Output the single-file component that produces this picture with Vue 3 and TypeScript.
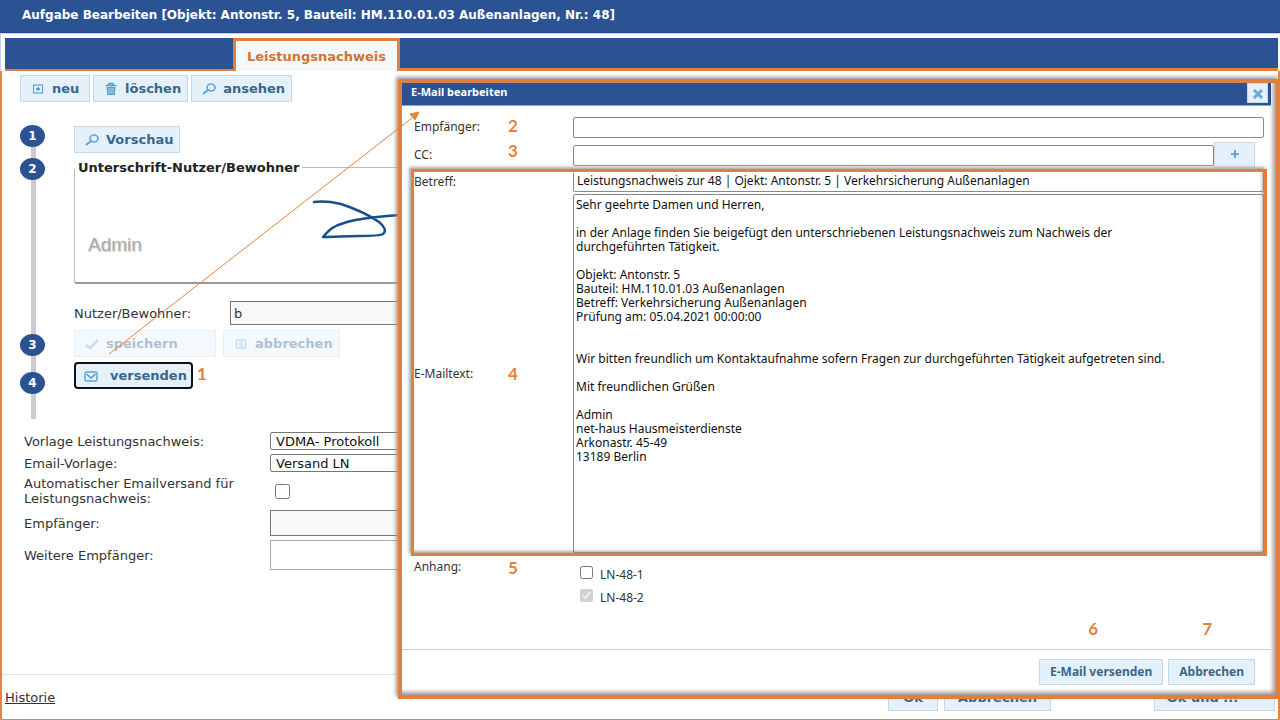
<script setup lang="ts">
import { ref } from 'vue'

const template = ref('VDMA- Protokoll')
const mailTemplate = ref('Versand LN')
const autoSend = ref(false)
const user = ref('b')
const recipient = ref('')
const cc = ref('')
const subject = ref('Leistungsnachweis zur 48 | Ojekt: Antonstr. 5 | Verkehrsicherung Außenanlagen')
const body = ref(
  [
    'Sehr geehrte Damen und Herren,',
    '',
    'in der Anlage finden Sie beigefügt den unterschriebenen Leistungsnachweis zum Nachweis der',
    'durchgeführten Tätigkeit.',
    '',
    'Objekt: Antonstr. 5',
    'Bauteil: HM.110.01.03 Außenanlagen',
    'Betreff: Verkehrsicherung Außenanlagen',
    'Prüfung am: 05.04.2021 00:00:00',
    '',
    '',
    'Wir bitten freundlich um Kontaktaufnahme sofern Fragen zur durchgeführten Tätigkeit aufgetreten sind.',
    '',
    'Mit freundlichen Grüßen',
    '',
    'Admin',
    'net-haus Hausmeisterdienste',
    'Arkonastr. 45-49',
    '13189 Berlin',
  ].join('\n'),
)
</script>

<template>
  <div class="app">
    <header class="title-bar">Aufgabe Bearbeiten [Objekt: Antonstr. 5, Bauteil: HM.110.01.03 Außenanlagen, Nr.: 48]</header>
    <nav class="tabs">
      <div class="tabs-left"></div>
      <button class="tab" type="button">Leistungsnachweis</button>
      <div class="tabs-right"></div>
    </nav>

    <main class="page">
      <div class="toolbar">
        <button class="btn" type="button">
          <svg class="icon" viewBox="0 0 14 14"><rect x="2.500" y="3" width="9" height="8" fill="none" stroke="#5ea6d6" stroke-width="1.200" /><path d="M7 5.200v3.600M5 7h4" stroke="#3f8cc4" stroke-width="1.400" /></svg>
          neu
        </button>
        <button class="btn" type="button">
          <svg class="icon" viewBox="0 0 14 14"><path d="M1.500 3.500h11M5 3V1.500h4V3" fill="none" stroke="#4f9bd0" stroke-width="1.400" /><path d="M2.500 5h9l-.8 8H3.300z" fill="#4f9bd0" /><path d="M5 6v6M7 6v6M9 6v6" stroke="#cfe7f7" stroke-width=".8" /></svg>
          löschen
        </button>
        <button class="btn" type="button">
          <svg class="icon" viewBox="0 0 14 14"><ellipse cx="9" cy="5.500" rx="4" ry="3.500" fill="none" stroke="#5ea6d6" stroke-width="1.700" /><path d="M6 8l-5 4" stroke="#5ea6d6" stroke-width="2.200" /></svg>
          ansehen
        </button>
      </div>

      <section class="work">
        <div class="steps">
          <span class="step">1</span>
          <span class="step">2</span>
          <span class="step late">3</span>
          <span class="step">4</span>
        </div>
        <div class="work-main">
          <div><button class="btn" type="button">
            <svg class="icon" viewBox="0 0 14 14"><ellipse cx="9" cy="5.500" rx="4" ry="3.500" fill="none" stroke="#5ea6d6" stroke-width="1.700" /><path d="M6 8l-5 4" stroke="#5ea6d6" stroke-width="2.200" /></svg>
            Vorschau
          </button></div>
          <fieldset class="sign">
            <legend>Unterschrift-Nutzer/Bewohner</legend>
            <div class="sign-area">
              <span class="sign-name">Admin</span>
              <svg class="signature" viewBox="0 0 100 44"><path d="M2 4C10 3 20 4 29 6c12 4 28 11 38 18 5 4 8 9 4 12-4 2-14 2-24 2-13 0-24 1-36 1 6-7 10-11 21-14C46 20 66 19 86 17l14-1" fill="none" stroke="#164f8c" stroke-width="2.500" stroke-linecap="round" stroke-linejoin="round" /></svg>
            </div>
          </fieldset>
          <div class="user-row">
            <label for="user">Nutzer/Bewohner:</label>
            <input id="user" v-model="user" class="gray" type="text" />
          </div>
          <div class="actions">
            <button class="btn wide" type="button" disabled>
              <svg class="icon" viewBox="0 0 14 14"><path d="M1 8l4 3 8-8" fill="none" stroke="#6fb0dc" stroke-width="2.500" /></svg>
              speichern
            </button>
            <button class="btn" type="button" disabled>
              <svg class="icon" viewBox="0 0 14 14"><rect x="2.500" y="3" width="9" height="8" fill="none" stroke="#5ea6d6" stroke-width="1.200" /><path d="M4.500 5h5M4.500 7h5M4.500 9h5" stroke="#5ea6d6" /></svg>
              abbrechen
            </button>
          </div>
          <div class="send">
            <button class="btn focused" type="button">
              <svg class="icon" viewBox="0 0 14 14"><rect x="1" y="3" width="12" height="9" rx="1.500" fill="none" stroke="#5ea6d6" stroke-width="1.500" /><path d="M2.500 5L7 9l4.500-4" fill="none" stroke="#4b97cc" stroke-width="1.500" /></svg>
              versenden
            </button>
            <span class="mark">1</span>
          </div>
        </div>
      </section>

      <section class="settings">
        <label for="tpl">Vorlage Leistungsnachweis:</label>
        <select id="tpl" v-model="template"><option>VDMA- Protokoll</option></select>
        <label for="mtpl">Email-Vorlage:</label>
        <select id="mtpl" v-model="mailTemplate"><option>Versand LN</option></select>
        <label for="auto">Automatischer Emailversand für<br />Leistungsnachweis:</label>
        <input id="auto" v-model="autoSend" class="auto" type="checkbox" />
        <label for="rcp">Empfänger:</label>
        <input id="rcp" class="gray" type="text" />
        <label for="more">Weitere Empfänger:</label>
        <textarea id="more"></textarea>
      </section>

      <footer class="page-foot">
        <a href="#historie">Historie</a>
        <div class="foot-buttons">
          <button class="btn" type="button">Ok</button>
          <button class="btn second" type="button">Abbrechen</button>
          <button class="btn third" type="button">Ok und ...</button>
        </div>
      </footer>
    </main>

    <section class="dialog" role="dialog" aria-label="E-Mail bearbeiten">
      <header class="dialog-head">
        <span>E-Mail bearbeiten</span>
        <button class="close" type="button" aria-label="Schließen">
          <svg viewBox="0 0 12 12"><path d="M2 2l8 8M10 2l-8 8" stroke="#6aa9d4" stroke-width="3" /></svg>
        </button>
      </header>
      <div class="dialog-body">
        <div class="row">
          <label for="to">Empfänger:</label><span class="mark">2</span>
          <input id="to" v-model="recipient" type="text" />
        </div>
        <div class="row cc">
          <label for="cc">CC:</label><span class="mark">3</span>
          <div class="with-plus">
            <input id="cc" v-model="cc" type="text" />
            <button class="plus" type="button" aria-label="Hinzufügen"><svg viewBox="0 0 10 10"><path d="M5 1v8M1 5h8" stroke="#6aa3cb" stroke-width="2" /></svg></button>
          </div>
        </div>
        <div class="highlight">
          <div class="row">
            <label for="subject">Betreff:</label><span></span>
            <input id="subject" v-model="subject" type="text" />
          </div>
          <div class="row text-row">
            <label for="body">E-Mailtext:</label><span class="mark">4</span>
            <textarea id="body" v-model="body"></textarea>
          </div>
        </div>
        <div class="row attach">
          <span>Anhang:</span><span class="mark">5</span>
          <div class="files">
            <label><input type="checkbox" /><span>LN-48-1</span></label>
            <label><input type="checkbox" checked disabled /><span>LN-48-2</span></label>
          </div>
        </div>
        <div class="end-marks"><span class="mark">6</span><span class="mark">7</span></div>
      </div>
      <footer class="dialog-foot">
        <button class="btn small" type="button">E-Mail versenden</button>
        <button class="btn small" type="button">Abbrechen</button>
      </footer>
    </section>

    <svg class="arrow" viewBox="0 0 312 244"><path d="M1 243L304 7" stroke="#e8833a" /><path d="M311 1l-4 8-5-6z" fill="#e8833a" stroke="#e8833a" /></svg>
  </div>
</template>

<style>
body {
  margin: 0;
  background: #fff;
}
</style>

<style scoped>
* {
  box-sizing: border-box;
}
.app {
  position: relative;
  display: flex;
  flex-direction: column;
  min-height: 100vh;
  overflow: hidden;
  background: #fff;
  color: #333;
  font: 13px/15px "DejaVu Sans", sans-serif;
}
input, select, textarea, button {
  font: inherit;
  color: inherit;
  margin: 0;
}
.title-bar {
  height: 33px;
  padding: 0 22px;
  background: #2b5394;
  color: #fff;
  font: bold 12px/30px "DejaVu Sans", sans-serif;
  border-bottom: 1px solid #24488a;
  white-space: nowrap;
}
.tabs {
  display: flex;
  height: 38px;
  padding-top: 4px;
  border-top: 1px solid #c5d3e6;
  border-left: 1px solid #c5d3e6;
}
.tabs-left, .tabs-right {
  background: #2b5394;
}
.tabs-left {
  width: 228px;
  margin-left: 4px;
  border-bottom: 2px solid #e17f3e;
}
.tabs-right {
  flex: 1;
  margin-right: 2px;
  border-bottom: 3px solid #e17f3e;
}
.tab {
  width: 167px;
  padding: 0;
  border: 3px solid #e17f3e;
  border-bottom: 0;
  background: #f5f8f9;
  color: #cf7431;
  font-weight: bold;
  font-size: 13px;
}
.page {
  flex: 1;
  display: flex;
  flex-direction: column;
  border: 2px solid #e8833a;
  border-top: 0;
  border-bottom-width: 1px;
  padding-top: 4px;
}
.btn {
  height: 27px;
  min-width: 70px;
  display: inline-flex;
  align-items: center;
  gap: 7px;
  padding: 0 6px 0 10px;
  border: 1px solid #c5d9e8;
  border-radius: 0;
  background: #e4f1fb;
  color: #38678c;
  font-weight: bold;
  white-space: nowrap;
}
.btn:disabled {
  opacity: 0.4;
}
.icon {
  width: 14px;
  height: 14px;
  flex: none;
}
.toolbar {
  display: flex;
  gap: 3px;
  padding-left: 18px;
}
.work {
  display: flex;
  padding: 23px 0 0 18px;
}
.steps {
  width: 54px;
  height: 294px;
  display: flex;
  flex-direction: column;
  gap: 11px;
  background: linear-gradient(#cbcbd2, #cbcbd2) 11px 10px / 5px 284px no-repeat;
}
.step {
  width: 25px;
  height: 22px;
  border-radius: 50%;
  background: #2b5394;
  color: #fff;
  font: bold 12px/22px "DejaVu Sans", sans-serif;
  text-align: center;
}
.late {
  margin: 143px 0 5px;
}
.work-main {
  flex: 1;
}
.work-main > div:first-child {
  height: 34px;
  padding-top: 1px;
}
.sign {
  height: 125px;
  margin: 0 0 17px;
  padding: 0;
  border: 1px solid #bbb;
  border-bottom: 2px solid #999;
  border-radius: 3px;
}
.sign legend {
  margin-left: 0;
  padding: 0 3px;
  color: #222;
  font: bold 13px/17px "DejaVu Sans", sans-serif;
}
.sign-area {
  display: flex;
  padding: 22px 0 0 13px;
}
.sign-name {
  width: 224px;
  padding-top: 37px;
  font: 19px/20px "Liberation Sans", Arial, sans-serif;
  color: #aaa;
  text-shadow: 1px 1px 1px #ccc;
}
.signature {
  width: 100px;
  height: 44px;
}
.user-row {
  display: flex;
  align-items: center;
  height: 24px;
}
.user-row label {
  width: 156px;
}
.user-row input {
  flex: 1;
  height: 24px;
  padding: 0 3px;
}
.gray {
  border: 1px solid #767676;
  background: #f8f8f8;
  border-radius: 0;
}
.actions {
  display: flex;
  gap: 7px;
  margin: 5px 0 5px;
}
.wide {
  width: 142px;
}
.send {
  display: flex;
  gap: 4px;
}
.btn.focused {
  padding-right: 4px;
  padding-left: 8px;
  gap: 12px;
  border: 2px solid #111;
  border-radius: 4px;
}
.mark {
  color: #e8803a;
  font: bold 17px/24px Lato, sans-serif;
}
.settings {
  display: grid;
  grid-template-columns: 246px 1fr;
  grid-template-rows: 18px 18px 30px 26px 30px;
  row-gap: 4px;
  align-items: center;
  padding: 13px 0 0 22px;
}
.settings select {
  height: 18px;
  appearance: none;
  border: 1px solid #767676;
  border-radius: 2px;
  background: #fff;
  color: #111;
  padding: 0 5px;
}
.settings .gray {
  height: 26px;
}
.settings textarea {
  height: 30px;
  border: 1px solid #aaa;
  resize: none;
}
.auto {
  width: 15px;
  height: 15px;
  margin-left: 5px;
}
.page-foot {
  display: flex;
  justify-content: space-between;
  align-items: center;
  height: 45px;
  margin-top: auto;
  padding-left: 3px;
  border-top: 1px solid #dde3e6;
}
.page-foot a {
  color: #333;
}
.foot-buttons {
  display: flex;
  padding-right: 3px;
}
.foot-buttons .btn {
  width: 50px;
  min-width: 0;
  padding: 0;
  justify-content: center;
}
.foot-buttons .second {
  width: 107px;
  margin: 0 103px 0 6px;
}
.foot-buttons .third {
  width: 121px;
  padding-right: 24px;
}
.dialog {
  position: absolute;
  left: 398px;
  right: 0;
  top: 79px;
  bottom: 21px;
  display: flex;
  flex-direction: column;
  padding: 0 5px 4px 0;
  border: 4px solid #e17f3e;
  background: #fff;
  box-shadow: -2px -2px 4px #999, inset -3px -3px 4px #999;
  font: 12px/14px "Noto Sans", sans-serif;
}
.dialog-head {
  display: flex;
  justify-content: space-between;
  height: 23px;
  padding: 0 3px 0 9px;
  background: #2b5394;
  border-bottom: 1px solid #8ba6cf;
  color: #fff;
  font: bold 11px/18px "Noto Sans", sans-serif;
}
.close {
  width: 21px;
  height: 20px;
  padding: 4px;
  border: 1px solid #c5d9e8;
  background: #e4f1fb;
}
.close svg {
  display: block;
  width: 12px;
  height: 12px;
}
.dialog-body {
  flex: 1;
  display: flex;
  flex-direction: column;
  padding: 10px 4px 0 9px;
}
.row {
  display: grid;
  grid-template-columns: 94px 65px 1fr;
  align-items: center;
  height: 22px;
  margin-left: 3px;
  margin-right: 3px;
}
.row .mark {
  line-height: 20px;
  align-self: start;
}
.row input[type="text"] {
  width: 100%;
  height: 21px;
  padding: 0 3px;
  border: 1px solid #8a8a8a;
  border-radius: 2px;
  background: #fff;
  color: #111;
}
.row.cc {
  margin-top: 3px;
  height: 28px;
}
.with-plus {
  display: flex;
  align-items: center;
  margin-right: 9px;
}
.with-plus input[type="text"] {
  flex: 1;
}
.plus {
  width: 41px;
  height: 26px;
  border: 1px solid #c5d9e8;
  background: #e4f1fb;
}
.plus svg {
  width: 10px;
  height: 10px;
}
.highlight {
  border: 3px solid #e17f3e;
  box-shadow: -2px -2px 3px #aaa, inset -2px -2px 3px #aaa;
}
.highlight .row {
  height: 20px;
  margin-left: 0;
  margin-right: 0;
}
.highlight input[type="text"] {
  height: 20px;
  padding-bottom: 3px;
  border-top-color: transparent;
  background: transparent;
}
.highlight .row.text-row {
  height: 361px;
  padding-top: 2px;
}
.text-row .mark {
  align-self: center;
}
.text-row textarea {
  display: block;
  height: 359px;
  padding: 3px 2px;
  border: 1px solid #8a8a8a;
  border-radius: 2px;
  background: transparent;
  color: #111;
  resize: none;
  white-space: pre-wrap;
}
.row.attach {
  align-items: start;
  height: auto;
  padding-top: 4px;
}
.attach .mark {
  line-height: 16px;
}
.files {
  display: flex;
  flex-direction: column;
  gap: 8px;
  padding: 6px 0 0 7px;
}
.files label {
  display: flex;
  gap: 7px;
}
.files input {
  width: 13px;
  height: 13px;
}
.files span {
  padding-top: 2px;
  line-height: 13px;
}
.end-marks {
  display: flex;
  justify-content: flex-end;
  gap: 104px;
  margin-top: auto;
  padding: 0 55px 8px 0;
}
.dialog-foot {
  display: flex;
  justify-content: flex-end;
  align-items: center;
  gap: 5px;
  height: 42px;
  padding: 2px 16px 0 0;
  border-top: 1px solid #ccc;
}
.btn.small {
  height: 26px;
  padding: 0 10px;
  font-size: 12px;
}
.arrow {
  position: absolute;
  left: 108px;
  top: 111px;
  width: 312px;
  height: 244px;
  pointer-events: none;
}
</style>
